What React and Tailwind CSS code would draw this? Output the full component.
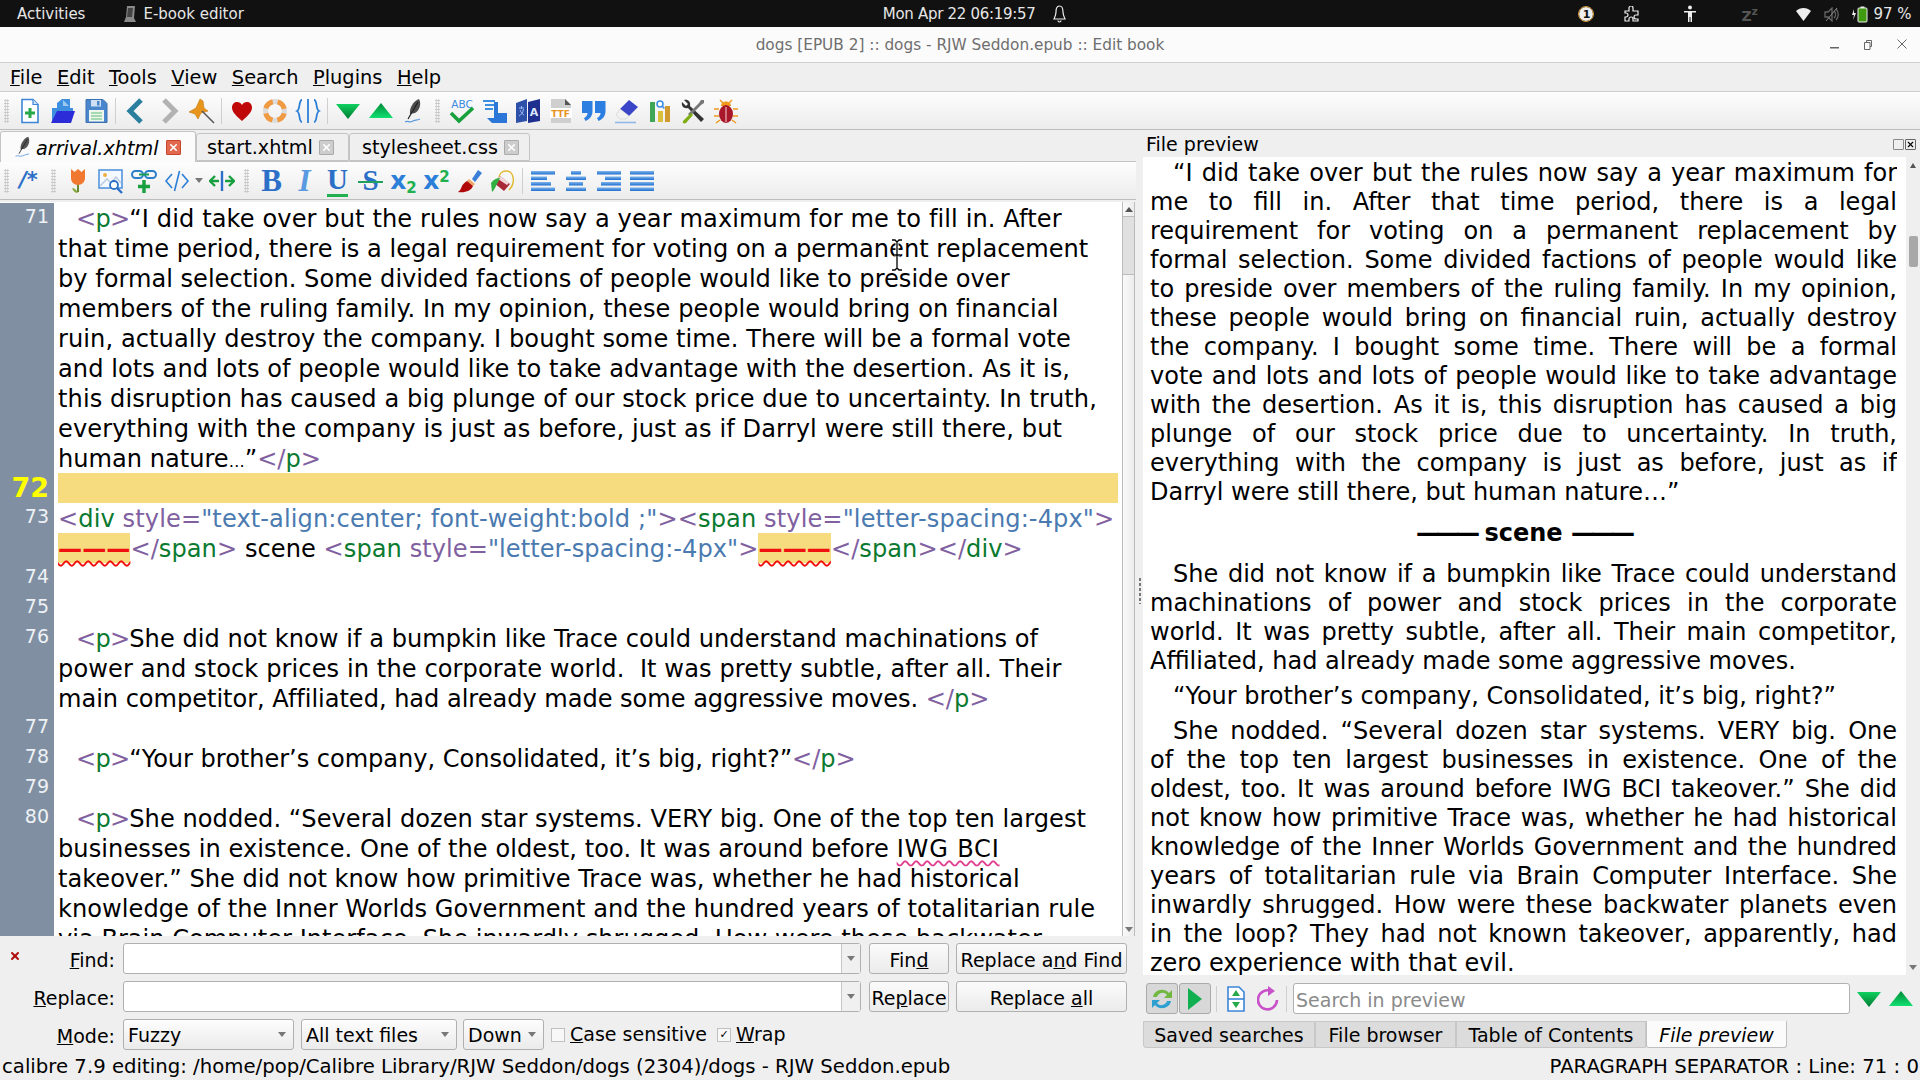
import React from 'react';
import { X } from 'lucide-react';

const Grad = ({ id, from, to }) => (
    <defs>
        <linearGradient id={id} x1="0" y1="0" x2="0" y2="1">
            <stop offset="0" stopColor={from} />
            <stop offset="1" stopColor={to} />
        </linearGradient>
    </defs>
);

const Svg = ({ children, w = 26, h = 26 }) => (
    <svg width={w} height={h} viewBox="0 0 26 26">{children}</svg>
);

// main toolbar icons
const NewDoc = () => (
    <Svg>
        <path d="M5 1.5h11l5 5v18H5z" fill="#fff" stroke="#3b86d8" strokeWidth="1.6" />
        <path d="M16 1.5v5h5" fill="#cfe2f7" stroke="#3b86d8" strokeWidth="1.2" />
        <path d="M13 10v10M8 15h10" stroke="#27a84a" strokeWidth="3" />
    </Svg>
);
const OpenFile = () => (
    <Svg>
        <path d="M2 25V10h5V5l5-4h8v9h3v4H8L4 25z" fill="#3f8fe0" />
        <path d="M13 2v6h6" fill="#9cc8f2" />
        <path d="M7 13h18l-4 12H1z" fill="#2c2cd8" />
    </Svg>
);
const Save = () => (
    <Svg>
        <path d="M3 1.5h17l4 4v19H3z" fill="#4a86cc" stroke="#3a70b0" />
        <rect x="8" y="2" width="10" height="6.5" fill="#cfe0f3" />
        <rect x="14" y="3" width="2.5" height="4.5" fill="#4a86cc" />
        <rect x="6" y="12" width="15" height="11.5" fill="#eef6ee" />
        <path d="M8 15h11M8 18h11M8 21h11" stroke="#8ccf9f" strokeWidth="1.4" />
    </Svg>
);
const Back = () => <Svg><path d="M18 2L7 13l11 11" fill="none" stroke="#2a7f9f" strokeWidth="5" /></Svg>;
const Forward = () => <Svg><path d="M8 2l11 11L8 24" fill="none" stroke="#b2b2b2" strokeWidth="5" /></Svg>;
const Pin = () => (
    <Svg>
        <path d="M11 1l3 2 1 7 4 3-7 2-3 6-3-5-6-2 7-4z" fill="#e8951c" stroke="#c87a10" strokeWidth="0.6" />
        <path d="M13 13l12 12" stroke="#5a5a5a" strokeWidth="1.6" />
    </Svg>
);
const Heart = () => (
    <Svg><path d="M13 23C5 16 3 13 3 9.5 3 6 5.5 4 8 4c2.300 0 4 1.300 5 3 1-1.700 2.700-3 5-3 2.500 0 5 2 5 5.500C23 13 21 16 13 23z" fill="#c00808" /></Svg>
);
const Buoy = () => (
    <Svg>
        <circle cx="13" cy="13" r="9.500" fill="none" stroke="#dcdcdc" strokeWidth="5" />
        <circle cx="13" cy="13" r="9.500" fill="none" stroke="#f09a42" strokeWidth="5" strokeDasharray="9.900 5" strokeDashoffset="-2.500" />
    </Svg>
);
const Braces = () => (
    <Svg>
        <path d="M7 2C3.500 2 5.500 11.500 2 13c3.500 1.500 1.500 11 5 11M19 2c3.500 0 1.500 9.500 5 11-3.500 1.500-1.500 11-5 11M13 1v24" fill="none" stroke="#2c7fd8" strokeWidth="1.800" />
    </Svg>
);
const TriDown = ({ id = 'g1' }) => (
    <Svg><Grad id={id} from="#10d060" to="#007a30" /><path d="M1 6h24L13 21z" fill={`url(#${id})`} /></Svg>
);
const TriUp = ({ id = 'g2' }) => (
    <Svg><Grad id={id} from="#008a38" to="#10e070" /><path d="M1 20h24L13 5z" fill={`url(#${id})`} /></Svg>
);
const Quill = () => (
    <Svg>
        <path d="M18 1c3 5 0 12-4 14l-5 1c-1-5 3-13 9-15z" fill="#4c4c4c" />
        <path d="M17 4L7 21" stroke="#222" strokeWidth="1.200" />
        <path d="M4 24c3-2 4 1 7-.5s4-1 8-2.500" fill="none" stroke="#5a9be0" strokeWidth="1.200" />
    </Svg>
);
const Spell = () => (
    <Svg>
        <text x="13" y="10" textAnchor="middle" fontSize="10.500" fill="#3c8be0" fontFamily="DejaVu Sans">ABC</text>
        <path d="M2 15l8 8L24 10" fill="none" stroke="#18a03c" strokeWidth="3.600" />
    </Svg>
);
const IndentHand = () => (
    <Svg>
        <path d="M1 3h12M3 7h9M3 11h8" stroke="#3f8fe0" strokeWidth="2" />
        <path d="M12 4h4v11h9v10H10l-5-5h7z" fill="#2c76d8" />
    </Svg>
);
const BookIcon = () => (
    <Svg>
        <path d="M1 5l11-4v22L1 25z" fill="#2d50a8" />
        <path d="M13 4l12-3v22l-12 2z" fill="#1f2f90" />
        <text x="19" y="18" textAnchor="middle" fontSize="11" fontWeight="700" fill="#dce6ff" fontFamily="DejaVu Sans">A</text>
        <path d="M4 10h5M6.500 8v3M4 18c2-1 4-3 4.500-7M5 12c1 2 2 4 4 5" fill="none" stroke="#9db8f0" strokeWidth="1" />
    </Svg>
);
const TtfFile = () => (
    <Svg>
        <path d="M3 1h14l6 6v18H3z" fill="#cfcfcf" />
        <path d="M17 1v6h6z" fill="#555" />
        <rect x="2" y="10" width="22" height="10" fill="#fff" />
        <text x="12.500" y="18.500" textAnchor="middle" fontSize="9" fontWeight="700" fill="#e8921c" fontFamily="DejaVu Sans">TTF</text>
    </Svg>
);
const Quotes = () => (
    <Svg>
        <path d="M1 3h10.500v10c0 5-2.500 8-7 10l-1.500-3c2-1 3.500-2.500 3.500-5H1zM14 3h10.500v10c0 5-2.500 8-7 10l-1.500-3c2-1 3.500-2.500 3.500-5H14z" fill="#2c7fe0" />
    </Svg>
);
const Eraser = () => (
    <Svg>
        <path d="M15 2l9 7-9 9-9-7z" fill="#3a46c8" />
        <path d="M6 11l9 7-3 3H6l-4-4z" fill="#f2f2f2" stroke="#ccc" strokeWidth="0.6" />
        <path d="M1 24.500h21" stroke="#8fb8e8" strokeWidth="1.600" />
    </Svg>
);
const Bars = () => (
    <Svg>
        <rect x="3" y="4" width="5" height="20" fill="#3fa658" />
        <rect x="11" y="13" width="5" height="11" fill="#d8c03c" />
        <rect x="18" y="8" width="5" height="16" fill="#d09a30" />
        <circle cx="13" cy="6" r="3" fill="#fff" stroke="#3c8be0" strokeWidth="1.500" />
        <path d="M15 8l2.500 2.500" stroke="#3c8be0" strokeWidth="1.500" />
    </Svg>
);
const Tools = () => (
    <Svg>
        <path d="M4 2l4 4-2 2-4-4c-1 4 2 7 6 6l13 14 3-3L10 8c1-4-2-7-6-6z" fill="#333" />
        <path d="M24 2l-3 0-2 3-11 11 2 2 11-11 3-2z" fill="#777" />
        <path d="M11 15l-8 8c-1 2 1 3 3 2l7-8z" fill="#7fae12" />
    </Svg>
);
const Bug = () => (
    <Svg>
        <path d="M7 2l3 3M19 2l-3 3M1 11h5M25 11h-5M1 18h5M25 18h-5M3 25l4-3M23 25l-4-3" stroke="#ee9a1c" strokeWidth="1.500" />
        <path d="M8 8c0-6 10-6 10 0z" fill="#ee9a1c" />
        <ellipse cx="13" cy="16" rx="7" ry="9" fill="#a8182a" />
        <path d="M13 9v15" stroke="#e8b8b8" strokeWidth="1.200" />
    </Svg>
);

// format toolbar icons
const Comment = () => <span className="text-[21px] leading-none font-bold italic text-[#2c6fc8]">/*</span>;
const Tulip = () => (
    <Svg>
        <path d="M13 15v9" stroke="#6a8a30" strokeWidth="2" />
        <path d="M13 25c-2-4-4-5-6-5 1 3 3 5 6 5z" fill="#8aa840" />
        <path d="M6 1l3.500 3L13 1l3.500 3L20 1v9c0 4-3 7-7 7s-7-3-7-7z" fill="#f07830" />
    </Svg>
);
const ImageIcon = () => (
    <Svg>
        <rect x="1" y="2" width="23" height="18" fill="#f4f8ff" stroke="#4a8fdc" strokeWidth="1.500" />
        <circle cx="7" cy="7" r="2" fill="#f0b040" />
        <path d="M2 18l7-7 4 4 5-6 5 6" fill="none" stroke="#b8c8dc" strokeWidth="1.400" />
        <circle cx="16" cy="17" r="4" fill="#fff" stroke="#2c6fc8" strokeWidth="1.800" />
        <path d="M19 20l5 5" stroke="#2c6fc8" strokeWidth="2.400" />
    </Svg>
);
const LinkIcon = () => (
    <Svg>
        <rect x="1" y="3" width="11" height="7" rx="3.500" fill="none" stroke="#2c7fc8" strokeWidth="2" />
        <rect x="14" y="3" width="11" height="7" rx="3.500" fill="none" stroke="#2c7fc8" strokeWidth="2" />
        <path d="M8 6.500h10" stroke="#18a050" strokeWidth="2" />
        <path d="M13 12v13M7 18.500h12" stroke="#18a040" strokeWidth="3.400" />
    </Svg>
);
const CodeTag = () => (
    <Svg>
        <path d="M8 6l-6 7 6 7M18 6l6 7-6 7M15.500 3l-5 20" fill="none" stroke="#2c7fd8" strokeWidth="1.600" />
    </Svg>
);
const SplitArrow = () => (
    <Svg>
        <path d="M13 3v20" stroke="#2c6fc8" strokeWidth="2.400" />
        <path d="M1 13h9M16 13h9" stroke="#18a040" strokeWidth="2.400" />
        <path d="M6 8l-5 5 5 5M20 8l5 5-5 5" fill="none" stroke="#18a040" strokeWidth="2.400" />
    </Svg>
);
const Glyph = ({ className, children }) => (
    <span className={`relative font-['Liberation_Serif',serif] leading-none ${className}`}>{children}</span>
);
const Brush = () => (
    <Svg>
        <path d="M15 11l6-9 4 3-7 9z" fill="#3a7fd8" />
        <path d="M12 11l6 5-2 2-6-5z" fill="#f0a868" />
        <path d="M10 13l6 5c-2 5-8 7-15 6 3-2 3-4 4-6s3-4 5-5z" fill="#b00808" />
    </Svg>
);
const Bucket = () => (
    <Svg>
        <path d="M9 9c1-7 12-9 14 0 1 5-1 10-4 13" fill="none" stroke="#e0b830" strokeWidth="1.400" />
        <path d="M10 8l10 8-6 7-10-8z" fill="#a82838" />
        <path d="M10 8l9 7-2 2-9-6z" fill="#f0d8d8" />
        <path d="M1 15c3-4 6-5 9-5l-5 10c-1 2-2 3-3 4z" fill="#30b040" />
    </Svg>
);
const Align = ({ kind }) => {
    const rows = { l: [[1, 24], [1, 16], [1, 20], [1, 24]], c: [[8, 10], [3, 20], [6, 14], [3, 20]], r: [[1, 24], [9, 16], [5, 20], [1, 24]], j: [[1, 24], [1, 24], [1, 24], [1, 24]] }[kind];
    return (
        <Svg>
            <Grad id={`al${kind}`} from="#7fb4ec" to="#1f6fd0" />
            {rows.map(([x, w], i) => <rect key={i} x={x} y={3 + i * 5.500} width={w} height="3.500" fill={`url(#al${kind})`} />)}
        </Svg>
    );
};

const Btn = ({ children }) => <div className="flex h-full w-[33px] shrink-0 items-center justify-center">{children}</div>;
const Sep = () => <div className="flex h-full w-[7px] shrink-0 items-center justify-center"><div className="h-[26px] w-px bg-[#cfcfcf]"></div></div>;
const Grip = ({ className = 'w-[15px]' }) => (
    <div className={`flex h-full shrink-0 items-center justify-center ${className}`}>
        <div className="h-[24px] w-[5px] bg-[radial-gradient(#c4c4c4_0.8px,transparent_1px)] bg-[length:2.500px_3px]"></div>
    </div>
);

const Tab = ({ active, children, className }) => (
    <div className={`flex items-center rounded-t-[3px] border border-[#c4c4c4] ${active ? 'z-10 -mb-px h-[31px] bg-[#fbfbfb] italic border-b-0' : 'mt-[3px] h-[28px] bg-[#efefef]'} ${className}`}>
        {children}
    </div>
);
const TabClose = ({ red }) => (
    <span className={`flex h-[15px] w-[15px] items-center justify-center rounded-[1px] border ${red ? 'border-[#c8452e] bg-[#e2694f]' : 'border-[#aaa] bg-[#cdcdcd]'}`}>
        <X size={11} strokeWidth={3.500} className="text-white" />
    </span>
);

// syntax bits for the code view
const Br = ({ children }) => <span className="text-[#80609f]">{children}</span>;
const Nm = ({ children }) => <span className="text-[#0a7a30]">{children}</span>;
const Val = ({ children }) => <span className="text-[#4a7ab0]">{children}</span>;
const Ind = () => <span className="inline-block w-[18px]"></span>;
const P = () => <><Ind /><span className="tracking-[-0.8px]"><Br>&lt;</Br><Nm>p</Nm><Br>&gt;</Br></span></>;
const EndP = () => <><Br>&lt;/</Br><Nm>p</Nm><Br>&gt;</Br></>;
const SpanOpen = () => <><Br>&lt;</Br><Nm>span</Nm> <Br>style=</Br><Val>"letter-spacing:-4px"</Val><Br>&gt;</Br></>;
const EndSpan = () => <><Br>&lt;/</Br><Nm>span</Nm><Br>&gt;</Br></>;
const Dashes = () => (
    <span className="-mt-[2.500px] inline-block h-[30px] bg-[#f7dc7f] align-top font-bold leading-[33px] text-[#f01010] underline decoration-wavy decoration-[#f01010] decoration-[1.500px] underline-offset-[3px]">———</span>
);

const Row = ({ n, children, hl, className = '' }) => (
    <div className="flex h-[30px] shrink-0">
        <div className={`w-[54px] shrink-0 bg-[#8090a2] pr-[5px] text-right ${n === 72 ? 'text-[27px] font-bold leading-[30px] text-[#ffff00]' : 'text-[19px] leading-[27px] text-[#eef2f6]'}`}>{n}</div>
        <div className={`ml-[4px] mr-[4px] flex-1 whitespace-pre pt-[2.500px] leading-[27.500px] ${hl ? 'bg-[#f7dc7f]' : ''} ${className}`}>{children}</div>
    </div>
);

const Preview = ({ lines, className = '' }) => (
    <div className={className}>
        {lines.map((l, i) => (
            <div key={i} className={`h-[29px] overflow-hidden leading-[29px] ${i === 0 ? 'pl-[23px]' : ''} ${i === lines.length - 1 ? '' : 'text-justify [text-align-last:justify]'}`}>{l}</div>
        ))}
    </div>
);

const Input = ({ className = '', children }) => (
    <div className={`flex h-[31px] items-center rounded-[3px] border border-[#b0b0b0] bg-white ${className}`}>{children}</div>
);
const Arrow = () => <span className="h-0 w-0 border-x-[4px] border-t-[5px] border-x-transparent border-t-[#777]"></span>;
const Combo = ({ className, children }) => (
    <div className={`flex h-[31px] items-center justify-between rounded-[3px] border border-[#b0b0b0] bg-linear-to-b from-[#fdfdfd] to-[#ebebeb] pl-[4px] pr-[7px] ${className}`}>
        <span className="pt-[2px]">{children}</span><Arrow />
    </div>
);
const PushBtn = ({ className, children }) => (
    <div className={`flex h-[31px] items-center justify-center rounded-[3px] border border-[#b0b0b0] bg-linear-to-b from-[#fbfbfb] to-[#ebebeb] ${className}`}><span className="pt-[3px]">{children}</span></div>
);
const Label = ({ children, className = 'justify-end' }) => (
    <div className={`flex h-[31px] w-[115px] shrink-0 items-center ${className}`}><span className="pt-[3px]">{children}</span></div>
);
const FlatTab = ({ className, children }) => (
    <div className={`flex h-[27px] items-center justify-center border border-[#c8c8c8] bg-[#dcdcdc] pt-[2px] ${className}`}>{children}</div>
);

export default function App() {
    return (
        <div className="relative flex h-[1080px] w-[1920px] flex-col overflow-hidden bg-[#efefef] font-['DejaVu_Sans',sans-serif] text-[19px] text-black">
            {/* gnome panel */}
            <div className="flex h-[27px] shrink-0 items-center whitespace-nowrap bg-[#111111] pt-px text-[15px] text-[#e6e6e6] [&>*]:shrink-0">
                <span className="ml-[17px]">Activities</span>
                <svg className="ml-[37px]" width="15" height="18" viewBox="0 0 15 18"><path d="M5 1h8l-1 12 2 4H2l2-5z" fill="#8a8a8a" /><path d="M6 3h5l-1 9H5z" fill="#444" /></svg>
                <span className="ml-[6px]">E-book editor</span>
                <span className="ml-[639px] tracking-[-0.3px]">Mon Apr 22 06:19:57</span>
                <svg className="ml-[18px]" width="13" height="18" viewBox="0 0 13 18"><path d="M6.500 1c3 0 3.500 3 3.500 6s1 5 2 7H1c1-2 2-4 2-7s.5-6 3.500-6zM5 15.500c0 2 3 2 3 0" fill="none" stroke="#eee" strokeWidth="1.200" /></svg>
                <span className="ml-[513px] flex h-[14px] w-[14px] items-center justify-center rounded-full bg-[#eee] text-[11px] font-bold leading-none text-[#111] outline outline-1 outline-[#d89a3c]">1</span>
                <svg className="ml-[31px]" width="16" height="16" viewBox="0 0 16 16"><path d="M1 5h4V2a2 2 0 0 1 4 0v3h5v4h-2a2 2 0 0 0 0 4h2v2H9v-2a2 2 0 0 0-4 0v2H1v-4h1a2 2 0 0 0 0-4H1z" fill="none" stroke="#eee" strokeWidth="1.200" /></svg>
                <svg className="ml-[44px]" width="12" height="18" viewBox="0 0 12 18"><circle cx="6" cy="2.500" r="2" fill="#eee" /><path d="M0 6h12v1.500H8V17H6.500v-5h-1v5H4V7.500H0z" fill="#eee" /></svg>
                <span className="ml-[45px] w-[16px] text-[14px] font-bold leading-none text-[#555]">Z<span className="text-[11px] align-super">z</span></span>
                <svg className="ml-[39px]" width="15" height="13" viewBox="0 0 15 13"><path d="M0 3c4-4 11-4 15 0L7.500 13z" fill="#eee" /></svg>
                <svg className="ml-[13px]" width="15" height="15" viewBox="0 0 15 15"><path d="M1 5h3l4-4v13l-4-4H1zM10 4c2 2 2 5 0 7M12 2c3 3 3 8 0 11" fill="none" stroke="#666" strokeWidth="1.300" /><path d="M2 14L13 1" stroke="#888" /></svg>
                <svg className="ml-[12px]" width="17" height="17" viewBox="0 0 17 17"><path d="M3 3L1 9h2l-1 5 3-7H3z" fill="#eee" /><rect x="7" y="2" width="9" height="14" rx="1" fill="#3f9a10" stroke="#eee" /><rect x="9.500" y="0.500" width="4" height="1.500" fill="#eee" /></svg>
                <span className="ml-[5px]">97 %</span>
            </div>

            {/* window title */}
            <div className="relative flex h-[36px] shrink-0 items-center justify-center border-b border-[#cfcfcf] bg-[#fbfbfb] pt-[2px] text-[15.300px] text-[#6e6e6e]">
                dogs [EPUB 2] :: dogs - RJW Seddon.epub :: Edit book
                <svg className="absolute left-[1830px] top-[20px]" width="9" height="2"><rect width="9" height="1.500" fill="#666" /></svg>
                <svg className="absolute left-[1864px] top-[13px]" width="8" height="10" viewBox="0 0 8 10"><path d="M.5 2.500h5.500v7H.5zM2.500 2.500V.5H7.500v6H6" fill="none" stroke="#666" /></svg>
                <svg className="absolute left-[1897px] top-[12px]" width="10" height="10" viewBox="0 0 10 10"><path d="M.5.5l9 9M9.500.5l-9 9" stroke="#666" /></svg>
            </div>

            {/* menu */}
            <div className="flex h-[29px] shrink-0 items-center gap-[14.500px] border-b border-[#cfcfcf] pl-[10px] pt-[2px] text-[19.400px]">
                <span><u>F</u>ile</span>
                <span><u>E</u>dit</span>
                <span><u>T</u>ools</span>
                <span><u>V</u>iew</span>
                <span><u>S</u>earch</span>
                <span><u>P</u>lugins</span>
                <span><u>H</u>elp</span>
            </div>

            {/* main toolbar */}
            <div className="flex h-[38px] shrink-0 items-center border-b border-[#bdbdbd] bg-linear-to-b from-[#fdfdfd] to-[#ececec]">
                <Grip className="w-[13px]" />
                <Btn><NewDoc /></Btn><Btn><OpenFile /></Btn><Btn><Save /></Btn>
                <Sep />
                <Btn><Back /></Btn><Btn><Forward /></Btn><Btn><Pin /></Btn>
                <Sep />
                <Btn><Heart /></Btn><Btn><Buoy /></Btn><Btn><Braces /></Btn>
                <Sep />
                <Btn><TriDown /></Btn><Btn><TriUp /></Btn><Btn><Quill /></Btn>
                <Grip />
                <Btn><Spell /></Btn><Btn><IndentHand /></Btn><Btn><BookIcon /></Btn><Btn><TtfFile /></Btn><Btn><Quotes /></Btn><Btn><Eraser /></Btn><Btn><Bars /></Btn><Btn><Tools /></Btn><Btn><Bug /></Btn>
            </div>

            <div className="flex min-h-0 flex-1">
                {/* left side: tabs, code view, search */}
                <div className="flex w-[1136px] shrink-0 flex-col">
                    <div className="flex h-[32px] shrink-0 items-end border-b border-[#c4c4c4] text-[19.200px]">
                        <Tab active className="w-[196px] pl-[12px]">
                            <svg width="22" height="22" viewBox="0 0 26 26" className="mr-px"><path d="M18 1c3 5 0 12-4 14l-5 1c-1-5 3-13 9-15z" fill="#555" /><path d="M17 4L7 21" stroke="#222" /><path d="M3 24c3-2 5 1 8-.5s4-1 8-2.500" fill="none" stroke="#5a9be0" /></svg>
                            <span className="pt-[4px]">arrival.xhtml</span>
                            <span className="ml-[8px] not-italic"><TabClose red /></span>
                        </Tab>
                        <Tab className="w-[153px] pl-[10px]">
                            <span className="pt-[3px]">start.xhtml</span>
                            <span className="ml-[6px]"><TabClose /></span>
                        </Tab>
                        <Tab className="w-[181px] pl-[12px]">
                            <span className="pt-[3px]">stylesheet.css</span>
                            <span className="ml-[6px]"><TabClose /></span>
                        </Tab>
                    </div>

                    <div className="flex h-[38px] shrink-0 items-center border-b border-[#bdbdbd] bg-linear-to-b from-[#fdfdfd] to-[#ececec]">
                        <Grip className="w-[12px]" />
                        <Btn><Comment /></Btn>
                        <Grip className="w-[16px]" />
                        <Btn><Tulip /></Btn><Btn><ImageIcon /></Btn><Btn><LinkIcon /></Btn><Btn><CodeTag /></Btn>
                        <div className="flex w-[12px] justify-center"><Arrow /></div>
                        <Btn><SplitArrow /></Btn>
                        <Grip className="w-[17px]" />
                        <Btn><Glyph className="text-[31px] font-bold text-[#2c6fc8]">B</Glyph></Btn>
                        <Btn><Glyph className="text-[31px] font-bold italic text-[#5a9ae0]">I</Glyph></Btn>
                        <Btn><Glyph className="border-b-[3px] border-[#20b050] text-[29px] font-bold text-[#2c6fc8]">U</Glyph></Btn>
                        <Btn><Glyph className="text-[29px] font-bold text-[#2c6fc8]">S<span className="absolute left-[-4px] right-[-4px] top-[15px] h-[2px] bg-[#20a060]"></span></Glyph></Btn>
                        <Btn><span className="text-[25px] font-bold leading-none text-[#2c7fd8]">x<sub className="text-[15px] text-[#20b050]">2</sub></span></Btn>
                        <Btn><span className="text-[25px] font-bold leading-none text-[#2c7fd8]">x<sup className="text-[15px] text-[#20b050]">2</sup></span></Btn>
                        <Btn><Brush /></Btn><Btn><Bucket /></Btn>
                        <Sep />
                        <Btn><Align kind="l" /></Btn><Btn><Align kind="c" /></Btn><Btn><Align kind="r" /></Btn><Btn><Align kind="j" /></Btn>
                    </div>

                    {/* code view */}
                    <div className="mt-[2px] flex h-[734px] shrink-0 pr-px">
                        <div className="flex min-w-0 flex-1 flex-col overflow-hidden bg-white pt-px text-[24.100px]">
                            <Row n={71} className="tracking-[0.1px]"><P />“I did take over but the rules now say a year maximum for me to fill in. After</Row>
                            <Row>that time period, there is a legal requirement for voting on a permanent replacement</Row>
                            <Row>by formal selection. Some divided factions of people would like to preside over</Row>
                            <Row className="tracking-[0.06px]">members of the ruling family. In my opinion, these people would bring on financial</Row>
                            <Row className="tracking-[0.07px]">ruin, actually destroy the company. I bought some time. There will be a formal vote</Row>
                            <Row className="tracking-[0.06px]">and lots and lots of people would like to take advantage with the desertion. As it is,</Row>
                            <Row className="tracking-[0.08px]">this disruption has caused a big plunge of our stock price due to uncertainty. In truth,</Row>
                            <Row className="tracking-[0.11px]">everything with the company is just as before, just as if Darryl were still there, but</Row>
                            <Row>human nature<span className="text-[16px]">…</span>”<EndP /></Row>
                            <Row n={72} hl> </Row>
                            <Row n={73} className="tracking-[0.1px]"><Br>&lt;</Br><Nm>div</Nm> <Br>style=</Br><Val>"text-align:center; font-weight:bold ;"</Val><Br>&gt;</Br><SpanOpen /></Row>
                            <Row className="tracking-[0.05px]"><Dashes /><EndSpan /> scene <SpanOpen /><Dashes /><EndSpan /><Br>&lt;/</Br><Nm>div</Nm><Br>&gt;</Br></Row>
                            <Row n={74}> </Row>
                            <Row n={75}> </Row>
                            <Row n={76} className="tracking-[0.03px]"><P />She did not know if a bumpkin like Trace could understand machinations of</Row>
                            <Row className="tracking-[0.09px]">power and stock prices in the corporate world.  It was pretty subtle, after all. Their</Row>
                            <Row className="tracking-[-0.04px]">main competitor, Affiliated, had already made some aggressive moves. <EndP /></Row>
                            <Row n={77}> </Row>
                            <Row n={78} className="tracking-[-0.05px]"><P />“Your brother’s company, Consolidated, it’s big, right?”<EndP /></Row>
                            <Row n={79}> </Row>
                            <Row n={80} className="tracking-[0.04px]"><P />She nodded. “Several dozen star systems. VERY big. One of the top ten largest</Row>
                            <Row className="tracking-[0.06px]">businesses in existence. One of the oldest, too. It was around before <span className="tracking-[0.8px] underline decoration-wavy decoration-[#e0408f] decoration-[1.500px] underline-offset-[3px]">IWG BCI</span></Row>
                            <Row>takeover.” She did not know how primitive Trace was, whether he had historical</Row>
                            <Row className="tracking-[0.04px]">knowledge of the Inner Worlds Government and the hundred years of totalitarian rule</Row>
                            <Row>via Brain Computer Interface. She inwardly shrugged. How were these backwater</Row>
                            <div className="flex-1 bg-white"><div className="h-full w-[54px] bg-[#8090a2]"></div></div>
                        </div>
                        <div className="flex w-[13px] shrink-0 flex-col border-x border-[#bbbbbb] bg-linear-to-r from-[#fafafa] to-[#ececec]">
                            <div className="flex h-[14px] items-center justify-center"><span className="h-0 w-0 border-x-[4px] border-b-[5px] border-x-transparent border-b-[#555]"></span></div>
                            <div className="h-[59px] border-y border-[#bbbbbb] bg-[#e0e0e0]"></div>
                            <div className="flex-1"></div>
                            <div className="flex h-[14px] items-center justify-center"><Arrow /></div>
                        </div>
                    </div>

                    {/* find and replace */}
                    <div className="flex flex-col gap-[7px] pt-[7px]">
                        <div className="flex">
                            <div className="flex h-[31px] w-[115px] shrink-0 items-center justify-between pl-[9px]">
                                <X size={12} strokeWidth={4} className="mb-[6px] text-[#b01010]" />
                                <span className="pt-[3px]"><u>F</u>ind:</span>
                            </div>
                            <Input className="ml-[8px] w-[738px] justify-end"><div className="flex h-full w-[19px] items-center justify-center border-l border-[#c8c8c8] bg-[#f0f0f0]"><Arrow /></div></Input>
                            <PushBtn className="ml-[8px] w-[80px]">Fin<u>d</u></PushBtn>
                            <PushBtn className="ml-[7px] w-[171px]">Replace a<u>n</u>d Find</PushBtn>
                        </div>
                        <div className="flex">
                            <Label><u>R</u>eplace:</Label>
                            <Input className="ml-[8px] w-[738px] justify-end"><div className="flex h-full w-[19px] items-center justify-center border-l border-[#c8c8c8] bg-[#f0f0f0]"><Arrow /></div></Input>
                            <PushBtn className="ml-[8px] w-[80px]">Re<u>p</u>lace</PushBtn>
                            <PushBtn className="ml-[7px] w-[171px]">Replace <u>a</u>ll</PushBtn>
                        </div>
                        <div className="flex items-center">
                            <Label><u>M</u>ode:</Label>
                            <Combo className="ml-[8px] w-[171px]">Fuzzy</Combo>
                            <Combo className="ml-[7px] w-[156px]">All text files</Combo>
                            <Combo className="ml-[6px] w-[81px]">Down</Combo>
                            <span className="ml-[7px] h-[14px] w-[14px] border border-[#c0c0c0] bg-[#f8f8f8]"></span>
                            <span className="ml-[5px]"><u>C</u>ase sensitive</span>
                            <span className="ml-[10px] flex h-[14px] w-[14px] items-center justify-center border border-[#c0c0c0] bg-[#f8f8f8] text-[11px] leading-none">✓</span>
                            <span className="ml-[5px]"><u>W</u>rap</span>
                        </div>
                    </div>
                </div>

                {/* splitter */}
                <div className="flex w-[7px] shrink-0 items-center justify-center">
                    <div className="h-[27px] w-[4px] bg-[radial-gradient(#777_1px,transparent_1.200px)] bg-[length:4px_5px]"></div>
                </div>

                {/* right side: preview dock */}
                <div className="flex h-[918px] min-w-0 flex-1 flex-col">
                    <div className="relative flex h-[27px] shrink-0 items-center pl-[3px] pt-[2px] text-[19px]">
                        File preview
                        <span className="absolute left-[750px] top-[9px] h-[11px] w-[11px] rounded-[1px] border border-[#888]"></span>
                        <span className="absolute left-[762px] top-[9px] flex h-[11px] w-[11px] items-center justify-center rounded-[1px] border border-[#666]"><X size={9} strokeWidth={3} /></span>
                    </div>
                    <div className="flex h-[818px] shrink-0">
                        <div className="min-w-0 flex-1 overflow-hidden bg-white pl-[7px] pr-[9px] pt-[2px] text-[24px]">
                            <Preview lines={[
                                '“I did take over but the rules now say a year maximum for',
                                'me to fill in. After that time period, there is a legal',
                                'requirement for voting on a permanent replacement by',
                                'formal selection. Some divided factions of people would like',
                                'to preside over members of the ruling family. In my opinion,',
                                'these people would bring on financial ruin, actually destroy',
                                'the company. I bought some time. There will be a formal',
                                'vote and lots and lots of people would like to take advantage',
                                'with the desertion. As it is, this disruption has caused a big',
                                'plunge of our stock price due to uncertainty. In truth,',
                                'everything with the company is just as before, just as if',
                                'Darryl were still there, but human nature…”',
                            ]} />
                            <div className="my-[12px] h-[29px] text-center font-bold leading-[29px]"><span className="tracking-[-4px]">———</span> scene <span className="tracking-[-4px]">———</span></div>
                            <Preview lines={[
                                'She did not know if a bumpkin like Trace could understand',
                                'machinations of power and stock prices in the corporate',
                                'world. It was pretty subtle, after all. Their main competitor,',
                                'Affiliated, had already made some aggressive moves.',
                            ]} />
                            <Preview className="mt-[6px]" lines={['“Your brother’s company, Consolidated, it’s big, right?”']} />
                            <Preview className="mt-[6px]" lines={[
                                'She nodded. “Several dozen star systems. VERY big. One',
                                'of the top ten largest businesses in existence. One of the',
                                'oldest, too. It was around before IWG BCI takeover.” She did',
                                'not know how primitive Trace was, whether he had historical',
                                'knowledge of the Inner Worlds Government and the hundred',
                                'years of totalitarian rule via Brain Computer Interface. She',
                                'inwardly shrugged. How were these backwater planets even',
                                'in the loop? They had not known takeover, apparently, had',
                                'zero experience with that evil.',
                            ]} />
                        </div>
                        <div className="flex w-[14px] shrink-0 flex-col items-center">
                            <div className="flex h-[16px] items-center justify-center"><span className="h-0 w-0 border-x-[3.500px] border-b-[5px] border-x-transparent border-b-[#555]"></span></div>
                            <div className="mt-[63px] h-[31px] w-[9px] rounded-[2px] bg-[#a8a8a8]"></div>
                            <div className="flex-1"></div>
                            <div className="flex h-[16px] items-center justify-center"><Arrow /></div>
                        </div>
                    </div>
                    <div className="flex h-[46px] shrink-0 items-center pl-[3px] pt-px">
                        <div className="flex h-[31px] w-[32px] items-center justify-center rounded-[3px] border border-[#aaa] bg-[#d8d8d8]">
                            <svg width="24" height="26" viewBox="0 0 24 26"><path d="M3 11C4 4 14 1 19 7l3-3v8h-8l3-3C14 5 8 7 7 11z" fill="#70b840" /><path d="M21 15c-1 7-11 10-16 4l-3 3v-8h8l-3 3c3 4 9 2 10-2z" fill="#2ca0d0" /></svg>
                        </div>
                        <div className="ml-px flex h-[31px] w-[32px] items-center justify-center rounded-[3px] border border-[#aaa] bg-[#d8d8d8]">
                            <svg width="16" height="24" viewBox="0 0 16 24"><path d="M1 1l14 11L1 23z" fill="#10b050" /></svg>
                        </div>
                        <div className="mx-[5px] h-[26px] w-px bg-[#cfcfcf]"></div>
                        <div className="ml-[5px] flex w-[18px] justify-center">
                            <svg width="18" height="26" viewBox="0 0 18 26"><path d="M1 1h11l5 5v19H1z" fill="#fff" stroke="#3b86d8" strokeWidth="1.600" /><path d="M1 13h16" stroke="#3b86d8" strokeWidth="1.600" /><path d="M9 4l4 6H5z" fill="#27a84a" /><path d="M9 22l4-6H5z" fill="#27a84a" /></svg>
                        </div>
                        <div className="ml-[12px] flex w-[23px] justify-center">
                            <svg width="23" height="26" viewBox="0 0 23 26"><path d="M14 5A9.500 9.500 0 1 0 20 14" fill="none" stroke="#c850c8" strokeWidth="2.600" /><path d="M11 0l7 5-7 5z" fill="#c850c8" /></svg>
                        </div>
                        <div className="mx-[6px] h-[26px] w-px bg-[#cfcfcf]"></div>
                        <Input className="w-[557px] pl-[2px] pt-[4px] text-[#8a8a8a]">Search in preview</Input>
                        <span className="ml-[6px]"><TriDown id="g3" /></span>
                        <span className="ml-[6px]"><TriUp id="g4" /></span>
                    </div>
                    <div className="flex h-[27px] shrink-0 items-stretch">
                        <FlatTab className="w-[172px] rounded-bl-[3px]">Saved searches</FlatTab>
                        <FlatTab className="w-[141px]">File browser</FlatTab>
                        <FlatTab className="w-[190px]">Table of Contents</FlatTab>
                        <div className="flex w-[141px] items-center justify-center rounded-b-[3px] border border-t-0 border-[#c0c0c0] bg-[#fbfbfb] pt-[2px] italic">File preview</div>
                    </div>
                </div>
            </div>

            {/* status bar */}
            <div className="flex h-[30px] shrink-0 items-center justify-between pl-[2px] pr-px pt-[4px] text-[19.700px]">
                <span>calibre 7.9 editing: /home/pop/Calibre Library/RJW Seddon/dogs (2304)/dogs - RJW Seddon.epub</span>
                <span>PARAGRAPH SEPARATOR : Line: 71 : 0</span>
            </div>

            {/* mouse pointer over the text */}
            <svg className="absolute left-[891px] top-[239px]" width="12" height="32" viewBox="0 0 12 32">
                <path d="M1 1h3l2 2 2-2h3M6 3v26M1 31h3l2-2 2 2h3M3 16h6" fill="none" stroke="#fff" strokeWidth="3" />
                <path d="M1 1h3l2 2 2-2h3M6 3v26M1 31h3l2-2 2 2h3M3 16h6" fill="none" stroke="#000" strokeWidth="1.300" />
            </svg>
        </div>
    );
}
